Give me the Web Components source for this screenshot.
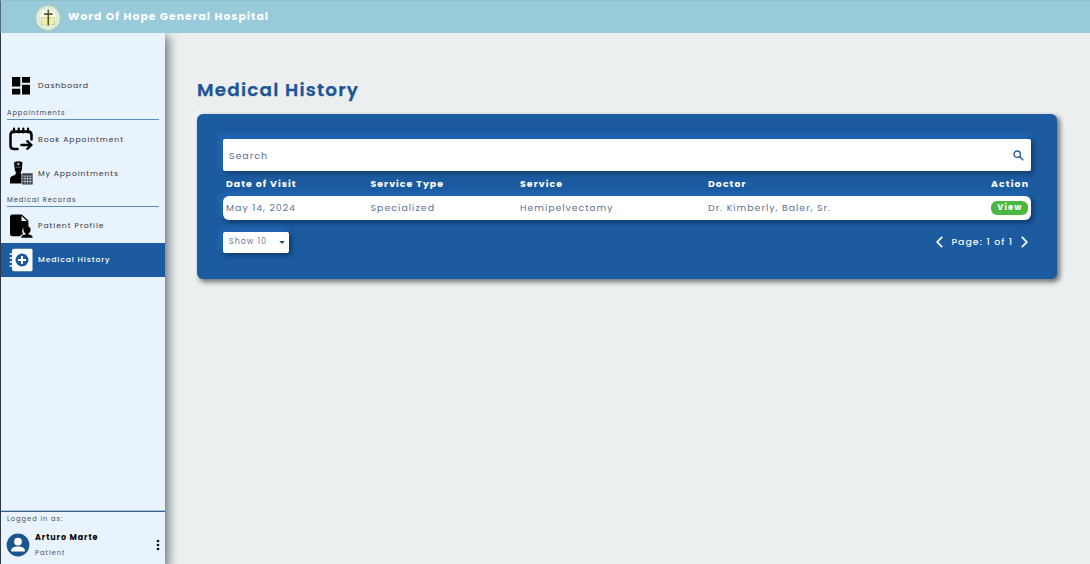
<!DOCTYPE html>
<html lang="en"><head><meta charset="utf-8"><title>Medical History</title>
<style>
html,body{margin:0;height:100%;overflow:hidden}
body{font-family:Poppins,Inter,"Open Sans",sans-serif;background:#ebefef}
</style></head><body>
<hospital-app></hospital-app>
<script>
const define=(name,html,after)=>{
  const t=document.createElement('template');t.innerHTML=html;
  customElements.define(name,class extends HTMLElement{
    constructor(){super();this.attachShadow({mode:'open'}).append(t.content.cloneNode(true));}
    connectedCallback(){if(after)after(this);}
  });
};

/* A one-line label whose tracking is set so that it spans the width in "w". */
define('fit-text',`<style>:host{display:inline-block;white-space:nowrap;line-height:1.2;flex:none}span{display:inline-block}:host([low]) span{padding-top:1px}</style><span><slot></slot></span>`,el=>{
  const w=+el.getAttribute('w'),s=el.shadowRoot.querySelector('span'),n=el.textContent.length;
  s.style.letterSpacing='0px';
  const sp=(w-s.getBoundingClientRect().width)/(n-1);
  s.style.letterSpacing=sp.toFixed(3)+'px';
  el.style.width=w+'px';
});

define('hospital-seal',`<style>:host{display:block;width:26px;height:26px}svg{display:block}</style>
<svg width="26" height="26" viewBox="0 0 26 26"><circle cx="13" cy="13" r="12.4" fill="#f4faf2" stroke="#a5c58b" stroke-width=".9"/>
<circle cx="13" cy="13" r="10.6" fill="none" stroke="#b5d3c3" stroke-width="1.3" stroke-dasharray="1 .9"/><circle cx="13" cy="13" r="8.8" fill="#fdfef4" stroke="#b9d2a3" stroke-width=".6"/>
<path d="M6.3 12.5q3.8-1 6.7 1 2.9-2 6.700-1v7.200q-4-1-6.700 1-2.700-2-6.700-1z" fill="#f0edb0" stroke="#b5c07c" stroke-width=".6"/>
<path d="M13.3 4.8v15.5M9 9.1h8.6" stroke="#4b5622" stroke-width="1.6" fill="none"/></svg>`);

define('top-bar',`<style>:host{display:flex;align-items:center;height:33px;background:#98cad9;box-sizing:border-box;padding:1px 0 0 34px;gap:7px;color:#fff;font-size:10.8px;font-weight:700;border-top:1px solid #91bfc9;border-left:1px solid #4f6d7c}</style><hospital-seal></hospital-seal><fit-text w="200">Word Of Hope General Hospital</fit-text>`);

define('nav-item',`<style>:host{display:flex;align-items:center;height:34px;padding-left:8px;font-size:7.700px;color:#30343b}
:host([active]){background:#1c5b9f;color:#fff;font-weight:500}
.i{width:24px;height:24px;margin-right:5px;display:flex;align-items:center;justify-content:center;flex:none}</style><div class="i"><slot name="icon"></slot></div><slot></slot>`);

define('nav-section',`<style>:host{display:flex;align-items:flex-end;box-sizing:border-box;height:17px;margin:0 6px 2px;padding-bottom:2px;border-bottom:1px solid #5d8dbc;font-size:6.700px;color:#3c434c}</style><slot></slot>`);

define('user-panel',`<style>:host{display:block;height:53px;box-sizing:border-box;border-top:1px solid #2b618c;box-shadow:0 -.5px #6d99bb;padding:3px 5px 0 5px;font-size:6.700px;color:#4a5058}
.r{display:flex;align-items:center;margin-top:6px;height:32px}.n{display:flex;flex-direction:column;gap:6px;margin-left:5px;flex:1}.b{font-size:8px;font-weight:700;color:#080808}svg{display:block;flex:none}fit-text{display:block}.l{margin-left:1px}</style>
<fit-text class="l" w="55.5">Logged in as:</fit-text><div class="r"><svg width="24" height="24" viewBox="0 0 24 24"><circle cx="12" cy="12" r="11.4" fill="#1c568f"/><circle cx="12" cy="8.6" r="3.9" fill="#fff"/><path d="M5.2 18.6v-1.1c0-2.9 3.1-4 6.8-4s6.8 1.1 6.8 4v1.1z" fill="#fff"/></svg>
<div class="n"><fit-text class="b" w="62.5">Arturo Marte</fit-text><fit-text w="29.5">Patient</fit-text></div>
<svg width="4" height="12" viewBox="0 0 4 12" fill="#111"><circle cx="2" cy="2" r="1.35"/><circle cx="2" cy="6" r="1.35"/><circle cx="2" cy="10" r="1.35"/></svg></div>`);

define('side-nav',`<style>:host{display:flex;flex-direction:column;width:165px;box-sizing:border-box;border-left:1px solid #303844;background:#e9f3fe;box-shadow:2px 4px 10px 1px rgba(20,30,35,.62);flex:none}nav{padding-top:36px;flex:1}svg{display:block}</style>
<nav>
<nav-item><svg slot="icon" width="18" height="18" viewBox="0 0 18 18"><path d="M0 0h8.3v9.5H0zM10 0h8v5.7h-8zM0 11.8h8.3V17.5H0zM10 7.8h8v9.7h-8z"/></svg><fit-text w="50">Dashboard</fit-text></nav-item>
<nav-section><fit-text w="57.5">Appointments</fit-text></nav-section>
<nav-item><svg slot="icon" width="24" height="24" viewBox="0 0 24 24" fill="none" stroke="#000" stroke-linecap="round" stroke-linejoin="round"><path d="M8.500 22H5q-3.500 0-3.500-3.500V8Q1.500 4.800 5 4.800h14q3.500 0 3.500 3.200v4.500" stroke-width="2.500"/><path d="M3 4.700h18" stroke-width="2.400"/><path d="M5 1.500v4M9.700 1.500v4M14.300 1.500v4M19 1.500v4" stroke-width="2.200"/><path d="M12.300 18h10M18.300 14.200l4.200 3.800-4.200 3.800" stroke-width="2.300"/></svg><fit-text low w="85">Book Appointment</fit-text></nav-item>
<nav-item><svg slot="icon" width="24" height="24" viewBox="0 0 24 24"><path d="M5 1.500Q9.500-1 13.500 1.500L13 6q.2 6-3.700 7Q5.600 12 5.500 6z"/><path d="M1 22.500V18q0-3 5-4l1-2h5l1 2q3 .5 4 2v6.500z"/><path d="M9.300 1.500v3M7.800 3h3" stroke="#e9f3fe" stroke-width=".8"/><path d="M6.500 6.300h5.600" stroke="#999" stroke-width=".6"/><rect x="12.500" y="11.500" width="11.500" height="12.500" fill="#e9f3fe"/><path d="M13.200 12.300h10.500v11.200H13.200z" fill="#353b43"/><path d="M13.500 15h10M13.500 17.700h10M13.500 20.500h10M16 15v8M18.600 15v8M21.200 15v8" stroke="#dce5ef" stroke-width=".6"/></svg><fit-text low w="80">My Appointments</fit-text></nav-item>
<nav-section><fit-text w="68.500">Medical Records</fit-text></nav-section>
<nav-item><svg slot="icon" width="24" height="24" viewBox="0 0 24 24"><path d="M3.500.5h9.300l6.600 6v6.300q-5-.6-6.200 3.500-.3 2.300 1 3.700-2.500.8-3.400 2.200H3.500Q1 22.200 1 20V3Q1 .5 3.500.5z"/><path d="M12.500 2v5h5.500z" fill="#e9f3fe"/><circle cx="18" cy="15.800" r="3.600"/><path d="M16.600 18h2.800v2.500q4.300.4 4.300 3.300H12.200q0-2.900 4.400-3.300z"/></svg><fit-text w="65.500">Patient Profile</fit-text></nav-item>
<nav-item active><svg slot="icon" width="24" height="24" viewBox="0 0 24 24"><path d="M5 .8h17.200q1.300 0 1.300 1.300v19.800q0 1.300-1.300 1.300H5q-2 0-2-1.800V2.600Q3 .8 5 .8z" fill="#fff"/><path d="M1.200 6h3M1.200 10h3M1.200 14h3M1.200 18h3" stroke="#fff" stroke-width="1.500" stroke-linecap="round"/><circle cx="13" cy="12" r="6.500" fill="#1c5b9f"/><path d="M13 8v8M9 12h8" stroke="#fff" stroke-width="2"/></svg><fit-text w="71.500">Medical History</fit-text></nav-item>
</nav><user-panel></user-panel>`);

const raised='box-shadow:2px 2px 5px rgba(8,37,73,.7),-2.500px -2.500px 6px rgba(40,116,205,.8);';
define('search-box',`<style>:host{display:flex;align-items:center;justify-content:space-between;height:32px;padding:0 7px 0 6px;background:#fff;border-radius:2px;color:#53719c;font-size:9.500px;${raised}}svg{margin-top:1px}</style><fit-text low w="38">Search</fit-text><svg width="11" height="11" viewBox="0 0 11 11" fill="none" stroke="#255c9b" stroke-width="1.400"><circle cx="4.200" cy="4.200" r="3.200"/><path d="M6.600 6.600l3.700 3.700"/></svg>`);

define('table-row',`<style>:host{display:grid;grid-template-columns:144.500px 149.500px 188px 1fr auto;align-items:center;padding:0 3px;height:24px;font-size:9.400px;color:#5b7298}
:host([head]){height:25px;color:#fff;font-weight:700}
:host(:not([head])){background:#fff;border-radius:6px;${raised}}</style><slot></slot>`);

define('view-button',`<style>:host{display:flex;align-items:center;justify-content:center;width:37.500px;height:14px;border-radius:6px;background:#48b840;color:#fff;font-size:8.200px;font-weight:700}</style><fit-text w="24">View</fit-text>`);

define('page-size',`<style>:host{display:flex;align-items:center;justify-content:space-between;box-sizing:border-box;width:66px;height:21px;padding:0 4px 1px 6px;background:#fff;border-radius:2px;color:#6b7894;font-size:8px;${raised}}svg{margin-top:2px}</style><fit-text w="37">Show 10</fit-text><svg width="6" height="3" viewBox="0 0 6 3"><path d="M.3 0h5.400L3 3z" fill="#174c84"/></svg>`);

define('page-nav',`<style>:host{display:flex;align-items:center;gap:9px;color:#f3f7fc;font-size:9.400px;font-weight:500;padding-right:3px}</style><svg width="7" height="12" viewBox="0 0 7 12" fill="none" stroke="#fff" stroke-width="1.700"><path d="M6.200.8L1.200 6l5 5.200"/></svg><fit-text w="60.500">Page: 1 of 1</fit-text><svg width="7" height="12" viewBox="0 0 7 12" fill="none" stroke="#fff" stroke-width="1.700"><path d="M.8.8l5 5.200-5 5.200"/></svg>`);

define('history-card',`<style>:host{display:block;box-sizing:border-box;height:165.500px;padding:25.500px 26px;border-radius:6px;background:#1c5b9f;box-shadow:2.500px 2.500px 5px rgba(25,30,35,.6),-2.500px -2.500px 6px rgba(255,255,255,.55)}.f{display:flex;align-items:center;justify-content:space-between;margin-top:11.500px}</style>
<search-box></search-box>
<table-row head><fit-text low w="69.500">Date of Visit</fit-text><fit-text low w="72.500">Service Type</fit-text><fit-text low w="42">Service</fit-text><fit-text low w="37.500">Doctor</fit-text><fit-text low w="37">Action</fit-text></table-row>
<table-row><fit-text w="69">May 14, 2024</fit-text><fit-text w="63.500">Specialized</fit-text><fit-text w="92.500">Hemipelvectomy</fit-text><fit-text w="122">Dr. Kimberly, Baler, Sr.</fit-text><view-button></view-button></table-row>
<div class="f"><page-size></page-size><page-nav></page-nav></div>`);

define('hospital-app',`<style>:host{display:flex;flex-direction:column;height:100vh;overflow:hidden}.b{display:flex;flex:1;min-height:0;overflow:hidden}main{flex:1;padding:44.500px 33px 0 32px}h1{margin:0 0 11px;font-size:18.400px;font-weight:600;color:#1c5595;height:25px;display:flex;align-items:center;-webkit-text-stroke:.25px #1c5595}</style>
<top-bar></top-bar><div class="b"><side-nav></side-nav><main><h1><fit-text w="161">Medical History</fit-text></h1><history-card></history-card></main></div>`);
</script></body></html>
